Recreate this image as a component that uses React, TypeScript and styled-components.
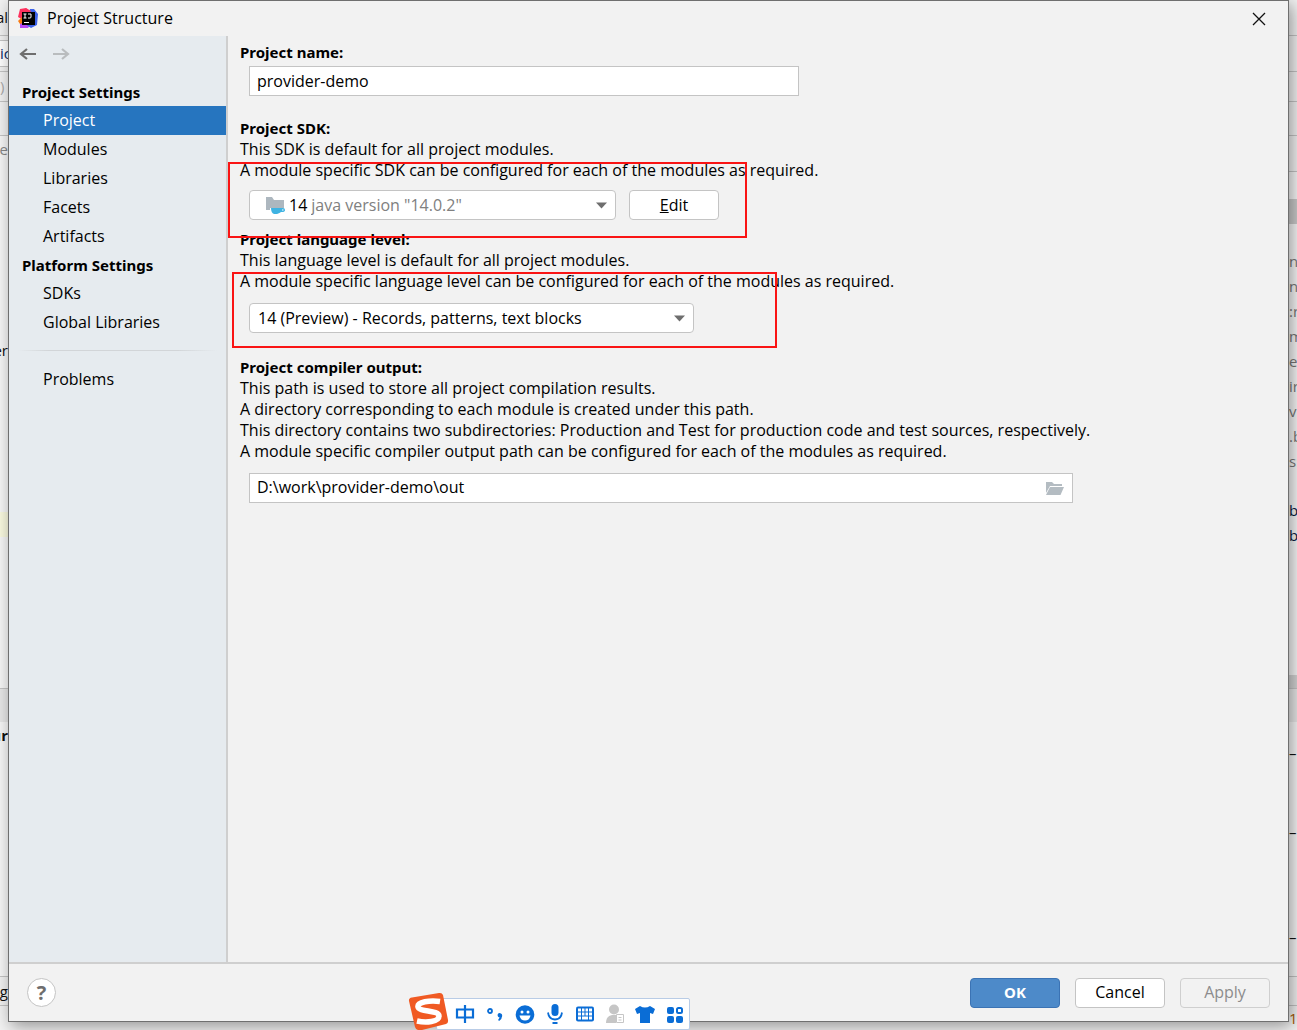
import React from "react";
import styled, { createGlobalStyle, css } from "styled-components";

const GlobalStyle = createGlobalStyle`
  *, *::before, *::after { box-sizing: border-box; }
  body {
    margin: 0;
    overflow: hidden;
    background: #f2f2f2;
    color: #000;
    font: 16px/21px "Open Sans", "Noto Sans", sans-serif;
  }
  button, input, select { font: inherit; color: inherit; }
`;

const boldText = css`
  font-family: "Noto Sans", "Open Sans", sans-serif;
  font-size: 15px;
  font-weight: 700;
`;

const Desktop = styled.div`
  position: relative;
  display: grid;
  grid-template-columns: 8px minmax(0, 1fr) 8px;
  height: 100vh;
  overflow: hidden;
`;

const Strip = styled.div`
  display: flex;
  flex-direction: column;
  min-width: 0;
  height: 100vh;
  overflow: hidden;
  white-space: nowrap;
`;

type SliceProps = {
  $h: number;
  $bg?: string;
  $color?: string;
  $bold?: boolean;
  $line?: boolean;
  $align: "flex-start" | "flex-end";
};

const Slice = styled.div<SliceProps>`
  display: flex;
  flex: 0 0 ${(p) => p.$h}px;
  align-items: center;
  justify-content: ${(p) => p.$align};
  background: ${(p) => p.$bg ?? "#f7f7f7"};
  color: ${(p) => p.$color ?? "#111"};
  font-size: 15px;
  font-weight: ${(p) => (p.$bold ? 700 : 400)};
  border-top: ${(p) => (p.$line ? "1px solid #c4c4c4" : "0")};
`;

const Dialog = styled.main`
  position: relative;
  z-index: 1;
  display: flex;
  flex-direction: column;
  margin-bottom: 8px;
  background: #f2f2f2;
  border: 1px solid #6f6f6f;
  box-shadow: 3px 4px 16px rgba(0, 0, 0, 0.4);
`;

const TitleBar = styled.header`
  display: flex;
  align-items: center;
  gap: 8px;
  height: 35px;
  padding: 0 22px 0 9px;
`;

const Title = styled.h1`
  flex: 1;
  margin: 0;
  font-size: 16px;
  font-weight: 400;
`;

const IconButton = styled.button`
  display: grid;
  place-items: center;
  padding: 0;
  border: 0;
  background: none;
`;

const Body = styled.div`
  display: flex;
  flex: 1;
  min-height: 0;
`;

const Sidebar = styled.nav`
  flex: 0 0 219px;
  background: #e6ebef;
  border-right: 2px solid #cfcfcf;
`;

const History = styled.div`
  display: flex;
  gap: 15px;
  height: 42px;
  padding: 9px 10px 15px;
`;

const NavHeading = styled.h2`
  ${boldText}
  margin: 0;
  padding-left: 13px;
  line-height: 28px;
`;

const NavList = styled.ul`
  margin: 0;
  padding: 0;
  list-style: none;
`;

const NavLink = styled.a<{ $active?: boolean }>`
  display: block;
  padding-left: 34px;
  line-height: 29px;
  text-decoration: none;
  color: ${(p) => (p.$active ? "#fff" : "#000")};
  background: ${(p) => (p.$active ? "#2675bf" : "transparent")};
`;

const NavSeparator = styled.hr`
  height: 1px;
  margin: 13px 9px 14px;
  border: 0;
  background: linear-gradient(90deg, transparent, #d2d5d8 15%, #d2d5d8 80%, transparent);
`;

const Content = styled.section`
  flex: 1;
  min-width: 0;
  padding: 6px 12px;
`;

const Group = styled.div<{ $after: number }>`
  position: relative;
  margin-bottom: ${(p) => p.$after}px;
`;

const GroupLabel = styled.label`
  ${boldText}
  display: block;
`;

const Line = styled.p`
  margin: 0;
  white-space: nowrap;
`;

const Field = styled.div<{ $gap: number }>`
  display: flex;
  gap: 13px;
  margin: ${(p) => p.$gap}px 0 0 9px;
`;

const TextBox = styled.input`
  width: 550px;
  height: 30px;
  padding: 0 7px 1px;
  border: 1px solid #c4c4c4;
  background: #fff;
  outline: 0;
`;

const PathBox = styled.div`
  display: flex;
  align-items: center;
  width: 824px;
  height: 30px;
  padding-right: 7px;
  border: 1px solid #c4c4c4;
  background: #fff;
`;

const PathInput = styled.input`
  flex: 1;
  min-width: 0;
  padding: 0 7px 1px;
  border: 0;
  background: none;
  outline: 0;
`;

const Combo = styled.div<{ $width: number; $indent: number }>`
  display: flex;
  align-items: center;
  width: ${(p) => p.$width}px;
  height: 30px;
  padding: 0 8px 0 ${(p) => p.$indent}px;
  border: 1px solid #c4c4c4;
  border-radius: 4px;
  background: #fff;
`;

const ComboSelect = styled.select<{ $muted?: boolean }>`
  flex: 1;
  min-width: 0;
  height: 28px;
  padding: 0;
  border: 0;
  background: none;
  appearance: none;
  outline: 0;
  color: ${(p) => (p.$muted ? "#808080" : "#000")};
`;

const SdkVersion = styled.span`
  margin: 0 4px;
`;

const Button = styled.button<{ $kind?: "primary" | "disabled" }>`
  width: 90px;
  height: 30px;
  padding: 0;
  border: 1px solid #c4c4c4;
  border-radius: 4px;
  background: #fff;
  ${(p) =>
    p.$kind === "primary" &&
    css`
      ${boldText}
      border-color: #3b73b4;
      background: #4d8ac9;
      color: #fff;
    `}
  ${(p) =>
    p.$kind === "disabled" &&
    css`
      border-color: #cfcfcf;
      background: #f2f2f2;
      color: #8c8c8c;
    `}
`;

const Mark = styled.div<{ $left: number; $top: number; $width: number; $height: number }>`
  position: absolute;
  z-index: 2;
  left: ${(p) => p.$left}px;
  top: ${(p) => p.$top}px;
  width: ${(p) => p.$width}px;
  height: ${(p) => p.$height}px;
  border: 2px solid #fa1414;
  pointer-events: none;
`;

const Footer = styled.footer`
  display: flex;
  align-items: center;
  gap: 15px;
  height: 59px;
  padding: 0 18px;
  border-top: 2px solid #cfcfcf;
`;

const HelpButton = styled.button`
  width: 29px;
  height: 29px;
  margin-right: auto;
  padding: 0;
  border: 1px solid #c4c4c4;
  border-radius: 50%;
  background: #fff;
  color: #6e6e6e;
  font-size: 20px;
  font-weight: 700;
`;

const InputMethodBar = styled.div`
  position: absolute;
  z-index: 3;
  left: 408px;
  bottom: 0;
  display: flex;
  align-items: flex-end;
`;

const InputMethodTools = styled.div`
  display: flex;
  align-items: center;
  gap: 8px;
  height: 32px;
  margin-left: -14px;
  padding: 0 3px 0 17px;
  border: 1px solid #b9cce6;
  border-radius: 2px;
  background: #fff;
`;

const Logo = styled.svg`
  position: relative;
  z-index: 1;
`;

type SliceData = {
  h: number;
  text?: string;
  bg?: string;
  color?: string;
  bold?: boolean;
  line?: boolean;
  start?: boolean;
};

const leftSlices: SliceData[] = [
  { h: 35, text: "al", bg: "#f2f2f2" },
  { h: 5, bg: "#f2f2f2", line: true },
  { h: 26, text: "ic", bg: "#fff", color: "#0a2a66", line: true, start: true },
  { h: 5, bg: "#f2f2f2", line: true },
  { h: 30, text: ")", bg: "#f2f2f2", color: "#aaa", line: true, start: true },
  { h: 34, bg: "#f2f2f2", line: true },
  { h: 28, text: "de", color: "#888", line: true },
  { h: 174 },
  { h: 26, text: "er" },
  { h: 149 },
  { h: 25, bg: "#fafae0" },
  { h: 151 },
  { h: 34, bg: "#e8e8e8", line: true },
  { h: 26, text: "ur", bold: true },
  { h: 228 },
  { h: 29, text: "g", bg: "#f2f2f2", line: true },
  { h: 25, bg: "#f2f2f2", line: true },
];

const rightSlices: SliceData[] = [
  { h: 35, bg: "#f2f2f2" },
  { h: 36, bg: "#f2f2f2", line: true },
  { h: 30, bg: "#f2f2f2", line: true },
  { h: 34, bg: "#f2f2f2", line: true },
  { h: 36, bg: "#f2f2f2", line: true },
  { h: 28, line: true },
  { h: 25, bg: "#cacaca" },
  { h: 25 },
  ...["na", "ns", ":r", "m", "e", "ir", "v", ".b", "s:"].map((text) => ({ h: 25, text, color: "#777" })),
  { h: 24 },
  { h: 25, text: "b", color: "#0a1a40" },
  { h: 25, text: "b", color: "#0a1a40" },
  { h: 127 },
  { h: 13, bg: "#d4d4d4" },
  { h: 34, bg: "#e8e8e8", line: true },
  { h: 18 },
  { h: 26, text: "–" },
  { h: 53 },
  { h: 26, text: "–" },
  { h: 79 },
  { h: 26, text: "–" },
  { h: 26 },
  { h: 29, bg: "#f2f2f2", line: true },
  { h: 25, text: "1", bg: "#f2f2f2", color: "#a85a00", line: true },
];

function EditorStrip({ side, slices }: { side: "left" | "right"; slices: SliceData[] }) {
  return (
    <Strip aria-hidden="true">
      {slices.map((s, i) => (
        <Slice
          key={i}
          $h={s.h}
          $bg={s.bg}
          $color={s.color}
          $bold={s.bold}
          $line={s.line}
          $align={side === "left" && !s.start ? "flex-end" : "flex-start"}
        >
          {s.text}
        </Slice>
      ))}
    </Strip>
  );
}

const AppLogo = () => (
  <svg width="21" height="21" viewBox="0 0 21 21" aria-hidden="true">
    <path d="M2 1 8 0l4 5-5 8-7-4z" fill="#fe315d" />
    <path d="M2 12l6-5 6 8-4 5-8 0z" fill="#b74af7" />
    <path d="M0 13l4-4 1 6-3 1z" fill="#f97a12" />
    <path d="M12 1l4 0 4 5-1 11-6 3-6-4z" fill="#3d63e8" />
    <path d="M8 0l5 3-2 3-5-3z" fill="#fe315d" />
    <path d="M4 4h13v13H4z" />
    <path d="M5.500 6h3M7 6v4M5.500 10h3M10 6h3v3q0 1-1 1h-2" fill="none" stroke="#fff" />
    <path d="M6 14.500h5" stroke="#fff" />
  </svg>
);

const Arrow = ({ color, flip }: { color: string; flip?: boolean }) => (
  <svg width="18" height="18" viewBox="0 0 18 18" aria-hidden="true">
    <path
      d={flip ? "M1 9h15M10 4l6 5-6 5" : "M17 9H2M8 4L2 9l6 5"}
      fill="none"
      stroke={color}
      strokeWidth="2.200"
    />
  </svg>
);

const CloseIcon = () => (
  <svg width="14" height="14" viewBox="0 0 14 14" aria-hidden="true">
    <path d="M1 1l12 12M13 1L1 13" stroke="#111" strokeWidth="1.300" />
  </svg>
);

const Caret = () => (
  <svg width="11" height="7" viewBox="0 0 11 7" aria-hidden="true">
    <path d="M0 0.500h11L5.500 6.500z" fill="#6e6e6e" />
  </svg>
);

const SdkIcon = () => (
  <svg width="20" height="18" viewBox="0 0 20 18" aria-hidden="true">
    <path d="M1 1h6l2 3h10v8H5v2H1z" fill="#adb7bf" />
    <path d="M6 12h12q2 0 2 2t-3 2h-1q-1 1-4 2H9q-3-1-3-6z" fill="#3fb3e2" />
    <path d="M17 13.500h1.500v1H17z" fill="#fff" />
  </svg>
);

const OpenFolder = () => (
  <svg width="20" height="15" viewBox="0 0 20 15" aria-hidden="true">
    <path d="M1 1h6l2 2h8v2H5L1 12z" fill="#b4bcc2" />
    <path d="M5 6h14l-3.500 8H1z" fill="#b4bcc2" />
  </svg>
);

const SogouLogo = () => (
  <Logo width="42" height="38" viewBox="0 0 42 38" aria-hidden="true">
    <path d="M4 5.500 31 1q3-.5 4 2l5 25q.5 3-2 4L14 38H10q-2 0-3-3L1 9q-.5-3 3-3.500z" fill="#f05a23" />
    <path
      d="M32 9.500C22 8 9 10 10 15S31 18 31 24s-13 7-22 5"
      fill="none"
      stroke="#fff"
      strokeWidth="5.500"
    />
  </Logo>
);

const BLUE = "#0a6dd6";

const toolIcons: { name: string; art: React.ReactNode }[] = [
  {
    name: "Chinese input",
    art: <path d="M3 6.500h16v8H3zM11 2v18" fill="none" stroke={BLUE} strokeWidth="2.200" />,
  },
  {
    name: "Punctuation",
    art: (
      <>
        <circle cx="6" cy="8" r="2" fill="none" stroke={BLUE} strokeWidth="1.800" />
        <path d="M13.500 12a2.300 2.300 0 1 1 4.600 1q0 3-3 5l-1-1 1.500-2.500q-2-.5-2.100-2.500z" fill={BLUE} />
      </>
    ),
  },
  {
    name: "Emoji",
    art: (
      <>
        <circle cx="11" cy="11.500" r="9.300" fill={BLUE} />
        <circle cx="8" cy="9" r="1.500" fill="#fff" />
        <circle cx="14" cy="9" r="1.500" fill="#fff" />
        <path d="M5.500 12.500h11q-1 5-5.500 5t-5.500-5z" fill="#fff" />
      </>
    ),
  },
  {
    name: "Voice",
    art: (
      <>
        <rect x="7.500" y="1" width="7" height="12" rx="3.500" fill={BLUE} />
        <path d="M4 9.500q1 7 7 7t7-7M8.500 20h5" fill="none" stroke={BLUE} strokeWidth="1.800" />
      </>
    ),
  },
  {
    name: "Keyboard",
    art: (
      <>
        <rect x="2" y="3.500" width="18" height="15" rx="2" fill={BLUE} />
        <path
          d="M4 5.500h3v3H4zM8 5.500h2.500v3H8zM11.500 5.500H14v3h-2.500zM15 5.500h3v3h-3zM4 9.500h3v3H4zM8 9.500h2.500v3H8zM11.500 9.500H14v3h-2.500zM15 9.500h3v3h-3zM4 13.500h3v3H4zM8 13.500h6v3H8zM15 13.500h3v3h-3z"
          fill="#fff"
        />
      </>
    ),
  },
  {
    name: "Account",
    art: (
      <>
        <circle cx="10" cy="6.500" r="5" fill="#c6c6c6" />
        <path d="M2 20q0-7 6-8h4v8z" fill="#c6c6c6" />
        <path d="M12.500 11.500h7v8h-7z" fill="#fff" stroke="#c6c6c6" />
        <path d="M14.500 14.500h3M14.500 17h3" stroke="#c6c6c6" />
      </>
    ),
  },
  {
    name: "Skin",
    art: <path d="M6 3q5 3 10 0l5 3-2 5-3-1v10H6V10l-3 1-2-5z" fill={BLUE} />,
  },
  {
    name: "Toolbox",
    art: (
      <>
        <rect x="3" y="4" width="7" height="7" rx="2" fill={BLUE} />
        <rect x="13" y="5" width="5" height="5" rx="1.500" fill="none" stroke={BLUE} strokeWidth="2" />
        <rect x="3" y="13" width="7" height="7" rx="2" fill={BLUE} />
        <rect x="12" y="13" width="7" height="7" rx="2" fill={BLUE} />
      </>
    ),
  },
];

const settingsItems = ["Project", "Modules", "Libraries", "Facets", "Artifacts"];
const platformItems = ["SDKs", "Global Libraries"];

function NavItems({ items, active }: { items: string[]; active?: string }) {
  return (
    <NavList>
      {items.map((item) => (
        <li key={item}>
          <NavLink href="#" $active={item === active} aria-current={item === active ? "page" : undefined}>
            {item}
          </NavLink>
        </li>
      ))}
    </NavList>
  );
}

export default function App() {
  return (
    <>
      <GlobalStyle />
      <Desktop>
        <EditorStrip side="left" slices={leftSlices} />
        <Dialog>
          <TitleBar>
            <AppLogo />
            <Title>Project Structure</Title>
            <IconButton aria-label="Close">
              <CloseIcon />
            </IconButton>
          </TitleBar>
          <Body>
            <Sidebar>
              <History>
                <IconButton aria-label="Back">
                  <Arrow color="#6e6e6e" />
                </IconButton>
                <IconButton aria-label="Forward">
                  <Arrow color="#b9bcbe" flip />
                </IconButton>
              </History>
              <NavHeading>Project Settings</NavHeading>
              <NavItems items={settingsItems} active="Project" />
              <NavHeading>Platform Settings</NavHeading>
              <NavItems items={platformItems} />
              <NavSeparator />
              <NavItems items={["Problems"]} />
            </Sidebar>
            <Content>
              <Group $after={22}>
                <GroupLabel htmlFor="name">Project name:</GroupLabel>
                <Field $gap={3}>
                  <TextBox id="name" defaultValue="provider-demo" />
                </Field>
              </Group>
              <Group $after={9}>
                <GroupLabel htmlFor="sdk">Project SDK:</GroupLabel>
                <Line>This SDK is default for all project modules.</Line>
                <Line>A module specific SDK can be configured for each of the modules as required.</Line>
                <Field $gap={9}>
                  <Combo $width={367} $indent={15}>
                    <SdkIcon />
                    <SdkVersion>14</SdkVersion>
                    <ComboSelect id="sdk" $muted>
                      <option>java version "14.0.2"</option>
                    </ComboSelect>
                    <Caret />
                  </Combo>
                  <Button>
                    <u>E</u>dit
                  </Button>
                </Field>
                <Mark $left={-12} $top={44} $width={519} $height={76} />
              </Group>
              <Group $after={24}>
                <GroupLabel htmlFor="level">Project language level:</GroupLabel>
                <Line>This language level is default for all project modules.</Line>
                <Line>A module specific language level can be configured for each of the modules as required.</Line>
                <Field $gap={11}>
                  <Combo $width={445} $indent={8}>
                    <ComboSelect id="level">
                      <option>14 (Preview) - Records, patterns, text blocks</option>
                    </ComboSelect>
                    <Caret />
                  </Combo>
                </Field>
                <Mark $left={-8} $top={43} $width={545} $height={76} />
              </Group>
              <Group $after={0}>
                <GroupLabel htmlFor="output">Project compiler output:</GroupLabel>
                <Line>This path is used to store all project compilation results.</Line>
                <Line>A directory corresponding to each module is created under this path.</Line>
                <Line>
                  This directory contains two subdirectories: Production and Test for production code and test
                  sources, respectively.
                </Line>
                <Line>
                  A module specific compiler output path can be configured for each of the modules as required.
                </Line>
                <Field $gap={11}>
                  <PathBox>
                    <PathInput id="output" defaultValue="D:\work\provider-demo\out" />
                    <IconButton aria-label="Browse">
                      <OpenFolder />
                    </IconButton>
                  </PathBox>
                </Field>
              </Group>
            </Content>
          </Body>
          <Footer>
            <HelpButton aria-label="Help">?</HelpButton>
            <Button $kind="primary">OK</Button>
            <Button>Cancel</Button>
            <Button $kind="disabled" disabled>
              Apply
            </Button>
          </Footer>
        </Dialog>
        <EditorStrip side="right" slices={rightSlices} />
        <InputMethodBar>
          <SogouLogo />
          <InputMethodTools>
            {toolIcons.map((tool) => (
              <IconButton key={tool.name} aria-label={tool.name}>
                <svg width="22" height="22" viewBox="0 0 22 22" aria-hidden="true">
                  {tool.art}
                </svg>
              </IconButton>
            ))}
          </InputMethodTools>
        </InputMethodBar>
      </Desktop>
    </>
  );
}
